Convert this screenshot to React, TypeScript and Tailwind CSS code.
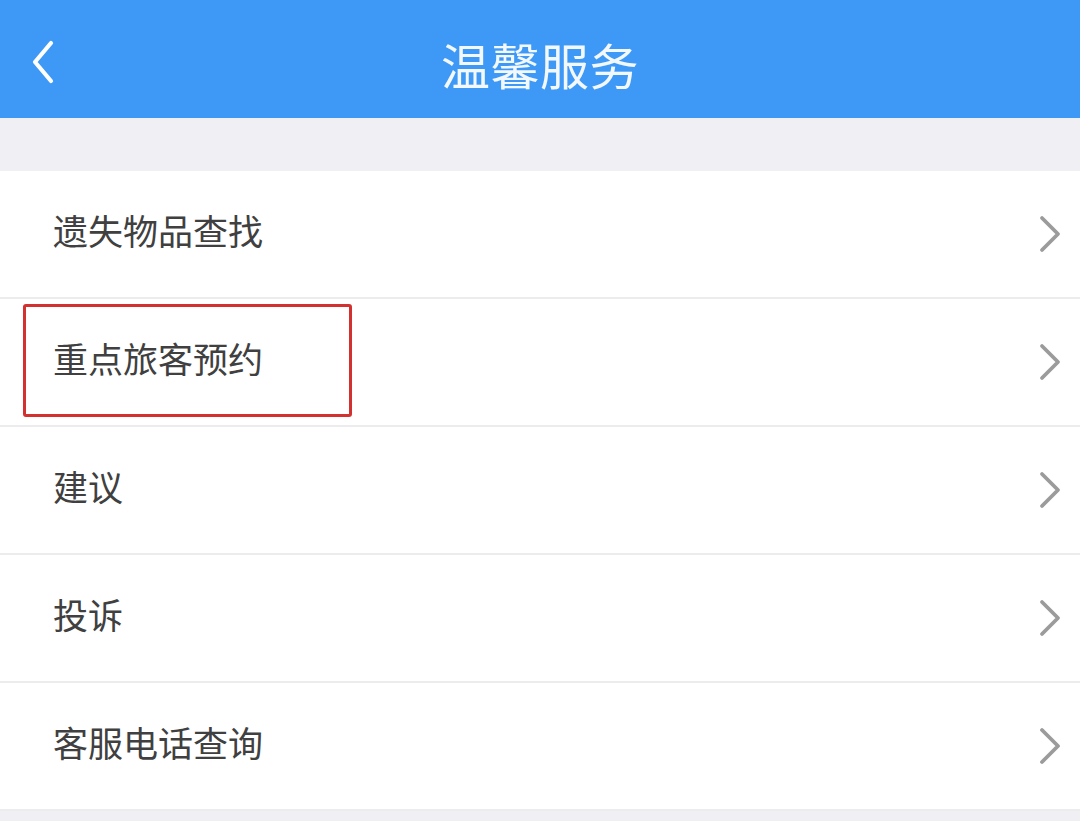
import React from "react";

const items = ["遗失物品查找", "重点旅客预约", "建议", "投诉", "客服电话查询"];

function Chevron() {
  return (
    <svg width="24" height="38" viewBox="0 0 24 38" className="shrink-0">
      <path d="M4 3 L20 19 L4 35" fill="none" stroke="#9b9b9b" strokeWidth="3.8" strokeLinecap="round" strokeLinejoin="round" />
    </svg>
  );
}

export default function App() {
  return (
    <div
      className="w-[1080px] h-[821px] bg-[#efeff4] overflow-hidden relative"
      style={{ fontFamily: '"Noto Sans CJK SC", "Noto Sans", sans-serif' }}
    >
      <header className="h-[118px] bg-[#3d99f5] relative flex items-center justify-center">
        <svg width="28" height="48" viewBox="0 0 28 48" className="absolute left-[28px] top-[38px]">
          <path d="M23 5 L7 24 L23 43" fill="none" stroke="#ffffff" strokeWidth="4.2" strokeLinecap="round" strokeLinejoin="round" />
        </svg>
        <h1 className="text-[49px] leading-none text-[#f3f8ff] mt-[8px] tracking-[0.5px]">温馨服务</h1>
      </header>
      <div className="h-[53px]" />
      <ul className="bg-white">
        {items.map((t) => (
          <li
            key={t}
            className="h-[128px] border-b-2 border-[#ececee] flex items-center justify-between pl-[53px] pr-[18px]"
          >
            <span className="text-[35px] leading-none text-[#404040] -mt-[10px]">{t}</span>
            <Chevron />
          </li>
        ))}
      </ul>
      <div className="absolute left-[23px] top-[304px] w-[329px] h-[113px] border-[3px] border-[#d2312f] rounded-[3px]" />
    </div>
  );
}
